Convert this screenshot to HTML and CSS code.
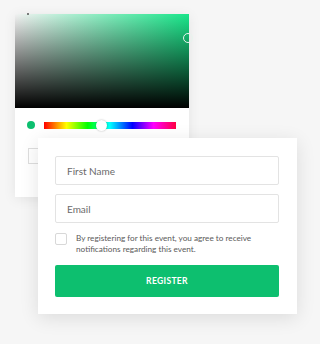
FILE: index.html
```html
<!DOCTYPE html>
<html>
<head>
<meta charset="utf-8">
<link rel="stylesheet" href="styles.css">
</head>
<body>
<div class="stage">
  <div class="picker">
    <div class="sv">
      <span class="sv-handle"></span>
      <span class="sv-dot"></span>
    </div>
    <div class="picker-body">
      <div class="hue-row">
        <span class="swatch"></span>
        <div class="hue">
          <span class="hue-thumb"></span>
        </div>
      </div>
      <div class="hex-box"></div>
    </div>
  </div>
  <form class="form-card">
    <div class="field">First Name</div>
    <div class="field">Email</div>
    <label class="agree">
      <span class="check"></span>
      <span class="agree-text">By registering for this event, you agree to receive notifications regarding this event.</span>
    </label>
    <div class="btn">REGISTER</div>
  </form>
</div>
</body>
</html>
```

FILE: styles.css
```css
* { box-sizing: border-box; }
html, body { margin: 0; padding: 0; }
body {
  background: #f6f6f6;
  font-family: Lato, "Open Sans", sans-serif;
  width: 320px;
  height: 344px;
  overflow: hidden;
}
.stage {
  display: grid;
  grid-template-areas: "s";
  align-items: start;
  justify-items: start;
}
.picker {
  grid-area: s;
  margin: 14px 0 0 15px;
  width: 174px;
  height: 183px;
  background: #fff;
  box-shadow: 0 2px 12px rgba(0,0,0,0.08);
  display: flex;
  flex-direction: column;
}
.sv {
  position: relative;
  height: 94px;
  background:
    linear-gradient(to top, #000 0%, rgba(0,0,0,0) 100%),
    linear-gradient(to right, #f2f2f2 0%, #19e68a 100%);
}
.sv-handle {
  position: absolute;
  right: -4px;
  top: 19px;
  width: 10px;
  height: 10px;
  border: 1.5px solid #e8f5ee;
  border-radius: 50%;
}
.sv-dot {
  position: absolute;
  left: 12px;
  top: -1px;
  width: 2px;
  height: 2px;
  background: #555;
  border-radius: 50%;
}
.picker-body {
  padding: 13px 0 0 12px;
}
.hue-row {
  display: flex;
  align-items: center;
  gap: 9px;
}
.swatch {
  width: 8px;
  height: 8px;
  border-radius: 50%;
  background: #0dbf6f;
}
.hue {
  position: relative;
  width: 132px;
  height: 7px;
  background: linear-gradient(to right, #ff0000 0%, #ffff00 17%, #00ff00 33%, #00ffff 50%, #0000ff 67%, #ff00ff 83%, #ff0040 100%);
}
.hue-thumb {
  position: absolute;
  left: 52px;
  top: -2px;
  width: 11px;
  height: 11px;
  border-radius: 50%;
  background: #fff;
  box-shadow: 0 0 2px rgba(0,0,0,0.3);
}
.hex-box {
  margin-top: 19px;
  margin-left: 1px;
  width: 60px;
  height: 16px;
  border: 1px solid #dedede;
}
.form-card {
  grid-area: s;
  margin: 138px 0 0 38px;
  width: 259px;
  height: 176px;
  background: #fff;
  box-shadow: 0 4px 18px rgba(0,0,0,0.11);
  padding: 18px 18px 0 17px;
  display: flex;
  flex-direction: column;
}
.field {
  height: 29px;
  border: 1px solid #e3e3e3;
  border-radius: 2px;
  padding-left: 11px;
  display: flex;
  align-items: center;
  font-size: 10px;
  color: #6a6a6a;
  margin-bottom: 9px;
}
.agree {
  display: flex;
  align-items: flex-start;
  gap: 9px;
  margin-top: 1px;
}
.check {
  flex: none;
  width: 12px;
  height: 12px;
  border: 1px solid #d8d8d8;
  border-radius: 2px;
}
.agree-text {
  font-size: 8.2px;
  line-height: 10.5px;
  color: #5a5a5a;
  margin-top: 0;
  width: 185px;
}
.btn {
  margin-top: 11px;
  height: 32px;
  background: #0dbf6f;
  border-radius: 2px;
  color: #fff;
  font-weight: 700;
  font-size: 8.6px;
  letter-spacing: 0.3px;
  display: flex;
  align-items: center;
  justify-content: center;
}
```
